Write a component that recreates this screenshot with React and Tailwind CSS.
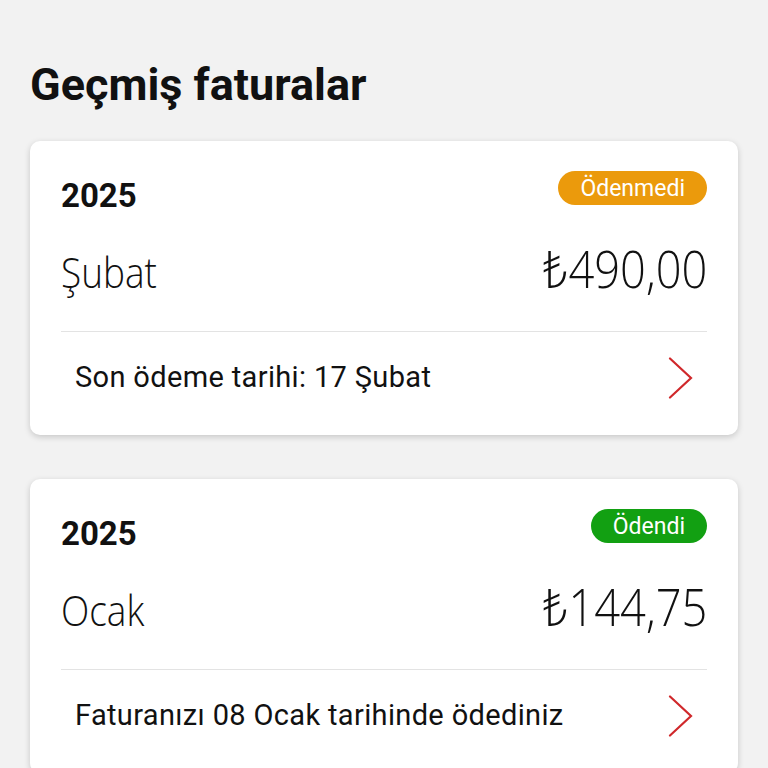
import React from "react";

function Chevron() {
  return (
    <svg width="26" height="42" viewBox="0 0 26 42" fill="none">
      <path d="M2 1.5 L23 21 L2 40.5" stroke="#d0282b" strokeWidth="2.2" strokeLinecap="round" strokeLinejoin="miter" />
    </svg>
  );
}

const light = { fontFamily: "'Open Sans', 'Noto Sans', 'DejaVu Sans', sans-serif" };
const roboto = { fontFamily: "Roboto, sans-serif" };

function BillCard({ year, status, statusClass, month, amount, note }) {
  return (
    <div className="bg-white rounded-[10px] shadow-[0_2px_6px_rgba(0,0,0,0.18)]">
      <div className="h-[190px] px-[31px] pt-[30px] flex flex-col">
        <div className="flex justify-between items-start h-[34px]">
          <span className="text-[33px] font-bold leading-none mt-[8px] text-[#111]" style={roboto}>{year}</span>
          <span className={`h-[34px] rounded-full px-[22px] flex items-center text-white text-[23px] leading-none ${statusClass}`} style={roboto}>{status}</span>
        </div>
        <div className="flex justify-between items-baseline mt-[37px]">
          <span className="text-[42px] font-light leading-none text-[#111] scale-x-[0.88] origin-left" style={light}>{month}</span>
          <span className="text-[52px] font-light leading-none text-[#111] scale-x-[0.87] origin-right" style={light}>{amount}</span>
        </div>
      </div>
      <div className="mx-[31px] h-[1px] bg-[#e3e3e3]" />
      <div className="h-[103px] pl-[45px] pr-[44px] pb-[12px] flex items-center justify-between">
        <span className="text-[29px] tracking-[0.35px] text-[#111]" style={roboto}>{note}</span>
        <Chevron />
      </div>
    </div>
  );
}

export default function App() {
  return (
    <div className="bg-[#f2f2f2] px-[30px] pt-[62px] overflow-hidden h-[768px]">
      <h1 className="text-[45px] font-bold leading-none text-[#111] mb-[34px]" style={roboto}>Geçmiş faturalar</h1>
      <div className="flex flex-col gap-[44px]">
        <BillCard year="2025" status="Ödenmedi" statusClass="bg-[#eb9a0c]" month="Şubat" amount="₺490,00" note="Son ödeme tarihi: 17 Şubat" />
        <BillCard year="2025" status="Ödendi" statusClass="bg-[#12a012]" month="Ocak" amount="₺144,75" note="Faturanızı 08 Ocak tarihinde ödediniz" />
      </div>
    </div>
  );
}
